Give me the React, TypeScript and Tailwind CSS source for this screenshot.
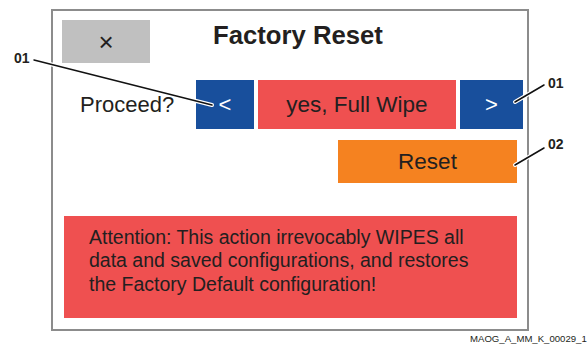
export default function App() {
  return (
    <div
      className="relative w-[587px] h-[347px] bg-white text-[#231f20] overflow-hidden"
      style={{ fontFamily: '"Liberation Sans", Arial, sans-serif' }}
    >
      {/* Screen frame */}
      <div className="ml-[51px] mt-[9px] w-[478px] h-[322px] border-2 border-[#8c8c8c] flex flex-col">
        {/* Header */}
        <div className="flex items-start">
          <div className="ml-[9px] mt-[9px] w-[88px] h-[43px] bg-[#c0c0c0] flex items-center justify-center text-[26px] leading-none font-light">
            ×
          </div>
          <div className="ml-[63px] mt-[10px] text-[25.7px] leading-[29px] font-bold">
            Factory Reset
          </div>
        </div>

        {/* Proceed selector */}
        <div className="mt-[17px] flex items-center h-[49px]">
          <div className="ml-[27px] w-[116px] text-[22px]">Proceed?</div>
          <div className="w-[58px] h-full bg-[#184f9c] text-white text-[22px] flex items-center justify-center">
            &lt;
          </div>
          <div className="w-[4px] h-[45px] bg-white" />
          <div className="w-[198px] h-full bg-[#ef5050] text-[22.5px] flex items-center justify-center">
            yes, Full Wipe
          </div>
          <div className="w-[4px] h-[45px] bg-white" />
          <div className="w-[63px] h-full bg-[#184f9c] text-white text-[22px] flex items-center justify-center">
            &gt;
          </div>
        </div>

        {/* Reset button */}
        <div className="mt-[11px] flex justify-end">
          <div className="mr-[10px] w-[179px] h-[43px] bg-[#f58220] text-[22.5px] flex items-center justify-center">
            Reset
          </div>
        </div>

        {/* Warning */}
        <div className="mt-[33px] ml-[11px] w-[453px] h-[102px] bg-[#ef5050] pl-[25px] pt-[10px] text-[19.5px] leading-[23.3px]">
          Attention: This action irrevocably WIPES all
          <br />
          data and saved configurations, and restores
          <br />
          the Factory Default configuration!
        </div>
      </div>

      <div className="mt-[2px] pl-[470px] text-[9.6px] leading-[11px] whitespace-nowrap">
        MAOG_A_MM_K_00029_1
      </div>

      {/* Callouts */}
      <svg className="absolute inset-0 pointer-events-none" width="587" height="347">
        {[
          [34, 60, 212, 105],
          [515, 102, 544, 85],
          [515, 165, 544, 148],
        ].map(([x1, y1, x2, y2], i) => (
          <g key={i}>
            <line x1={x1} y1={y1} x2={x2} y2={y2} stroke="#fff" strokeWidth="4" strokeLinecap="round" />
            <line x1={x1} y1={y1} x2={x2} y2={y2} stroke="#111" strokeWidth="1.5" strokeLinecap="round" />
          </g>
        ))}
      </svg>
      <div className="absolute left-[14px] top-[51px] text-[14px] leading-[14px] font-bold">01</div>
      <div className="absolute left-[548px] top-[76px] text-[14px] leading-[14px] font-bold">01</div>
      <div className="absolute left-[548px] top-[137px] text-[14px] leading-[14px] font-bold">02</div>
    </div>
  );
}
